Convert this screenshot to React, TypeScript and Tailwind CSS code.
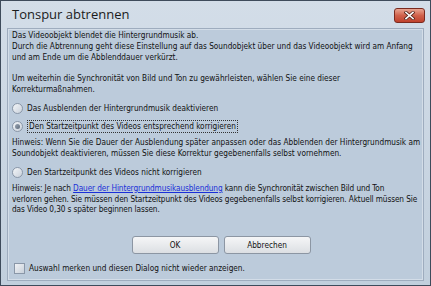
import React from "react";

const body = { fontFamily: '"DejaVu Sans Condensed", "DejaVu Sans", "Liberation Sans", sans-serif' };

function Radio({ checked }: { checked?: boolean }) {
  return (
    <span className="relative w-[11px] h-[11px] rounded-full border border-[#8a97a8] bg-gradient-to-br from-[#f4f6f8] to-[#c9d1db] shrink-0 flex items-center justify-center">
      {checked && <span className="w-[5px] h-[5px] rounded-full bg-gradient-to-br from-[#9aa6b4] to-[#5f6c7c]" />}
    </span>
  );
}

export default function App() {
  return (
    <div className="w-[431px] h-[286px] bg-[#3e4b5b] p-px" style={body}>
      <div className="w-full h-full bg-gradient-to-b from-[#d3dde8] to-[#c1cfdd] flex flex-col px-[6px] pb-[4px]">
        <div className="h-[27px] flex items-start justify-between shrink-0">
          <div
            className="text-[13px] text-[#1b1b1b] pl-[5px] pt-[5px] leading-[16px]"
            style={{ fontFamily: '"Open Sans", "Noto Sans", sans-serif' }}
          >
            Tonspur abtrennen
          </div>
          <div className="mt-[7px] mr-[-1px] w-[31px] h-[15px] rounded-[3px] border border-[#7a2a1f] bg-gradient-to-b from-[#e8a592] via-[#d0614b] to-[#c0412c] flex items-center justify-center">
            <svg width="11" height="9" viewBox="0 0 11 9">
              <path d="M2 1.5 L9 7.5 M9 1.5 L2 7.5" stroke="#5a2a20" strokeWidth="3.2" strokeLinecap="square" />
              <path d="M2 1.5 L9 7.5 M9 1.5 L2 7.5" stroke="#ffffff" strokeWidth="1.6" strokeLinecap="square" />
            </svg>
          </div>
        </div>
        <div className="flex-1 border border-[#9eacbe] bg-[#bccbdb] shadow-[inset_0_0_0_1px_#d3dde8] pl-[4px] pr-[1px] pt-[1px] text-[8.2px] leading-[11px] text-[#111] flex flex-col">
          <p>
            Das Videoobjekt blendet die Hintergrundmusik ab.
            <br />
            Durch die Abtrennung geht diese Einstellung auf das Soundobjekt über und das Videoobjekt wird am Anfang und am Ende um die Abblenddauer verkürzt.
          </p>
          <p className="mt-[10px]">
            Um weiterhin die Synchronität von Bild und Ton zu gewährleisten, wählen Sie eine dieser
            <br />
            Korrekturmaßnahmen.
          </p>
          <div className="mt-[5px] h-[16px] flex items-center gap-[4px]">
            <Radio />
            <span>Das Ausblenden der Hintergrundmusik deaktivieren</span>
          </div>
          <div className="mt-[2px] h-[16px] flex items-center gap-[4px]">
            <Radio checked />
            <span className="border border-dotted border-[#333] px-[1px] leading-[11px]">Den Startzeitpunkt des Videos entsprechend korrigieren</span>
          </div>
          <p className="mt-[3px] leading-[10.5px]">
            Hinweis: Wenn Sie die Dauer der Ausblendung später anpassen oder das Abblenden der Hintergrundmusik am Soundobjekt deaktivieren, müssen Sie diese Korrektur gegebenenfalls selbst vornehmen.
          </p>
          <div className="mt-[6px] h-[16px] flex items-center gap-[4px]">
            <Radio />
            <span>Den Startzeitpunkt des Videos nicht korrigieren</span>
          </div>
          <p className="mt-[3px] leading-[10.5px] whitespace-nowrap tracking-[-0.1px]">
            Hinweis: Je nach <span className="text-[#1a2fd8] underline">Dauer der Hintergrundmusikausblendung</span> kann die Synchronität zwischen Bild und Ton
            <br />
            verloren gehen. Sie müssen den Startzeitpunkt des Videos gegebenenfalls selbst korrigieren. Aktuell müssen Sie
            <br />
            das Video 0,30 s später beginnen lassen.
          </p>
          <div className="mt-[21.5px] flex justify-center gap-[5px] pl-[8px]">
            <div className="w-[87px] h-[18px] rounded-[3px] border border-[#8c96a3] bg-gradient-to-b from-[#f5f6f7] to-[#dcdfe3] flex items-center justify-center">OK</div>
            <div className="w-[87px] h-[18px] rounded-[3px] border border-[#8c96a3] bg-gradient-to-b from-[#f5f6f7] to-[#dcdfe3] flex items-center justify-center">Abbrechen</div>
          </div>
          <div className="mt-[9px] flex items-center gap-[4px] pl-[2px]">
            <span className="w-[11px] h-[11px] border border-[#8a97a8] bg-gradient-to-br from-[#f0f2f5] to-[#c9d1db] shrink-0" />
            <span>Auswahl merken und diesen Dialog nicht wieder anzeigen.</span>
          </div>
        </div>
      </div>
    </div>
  );
}
